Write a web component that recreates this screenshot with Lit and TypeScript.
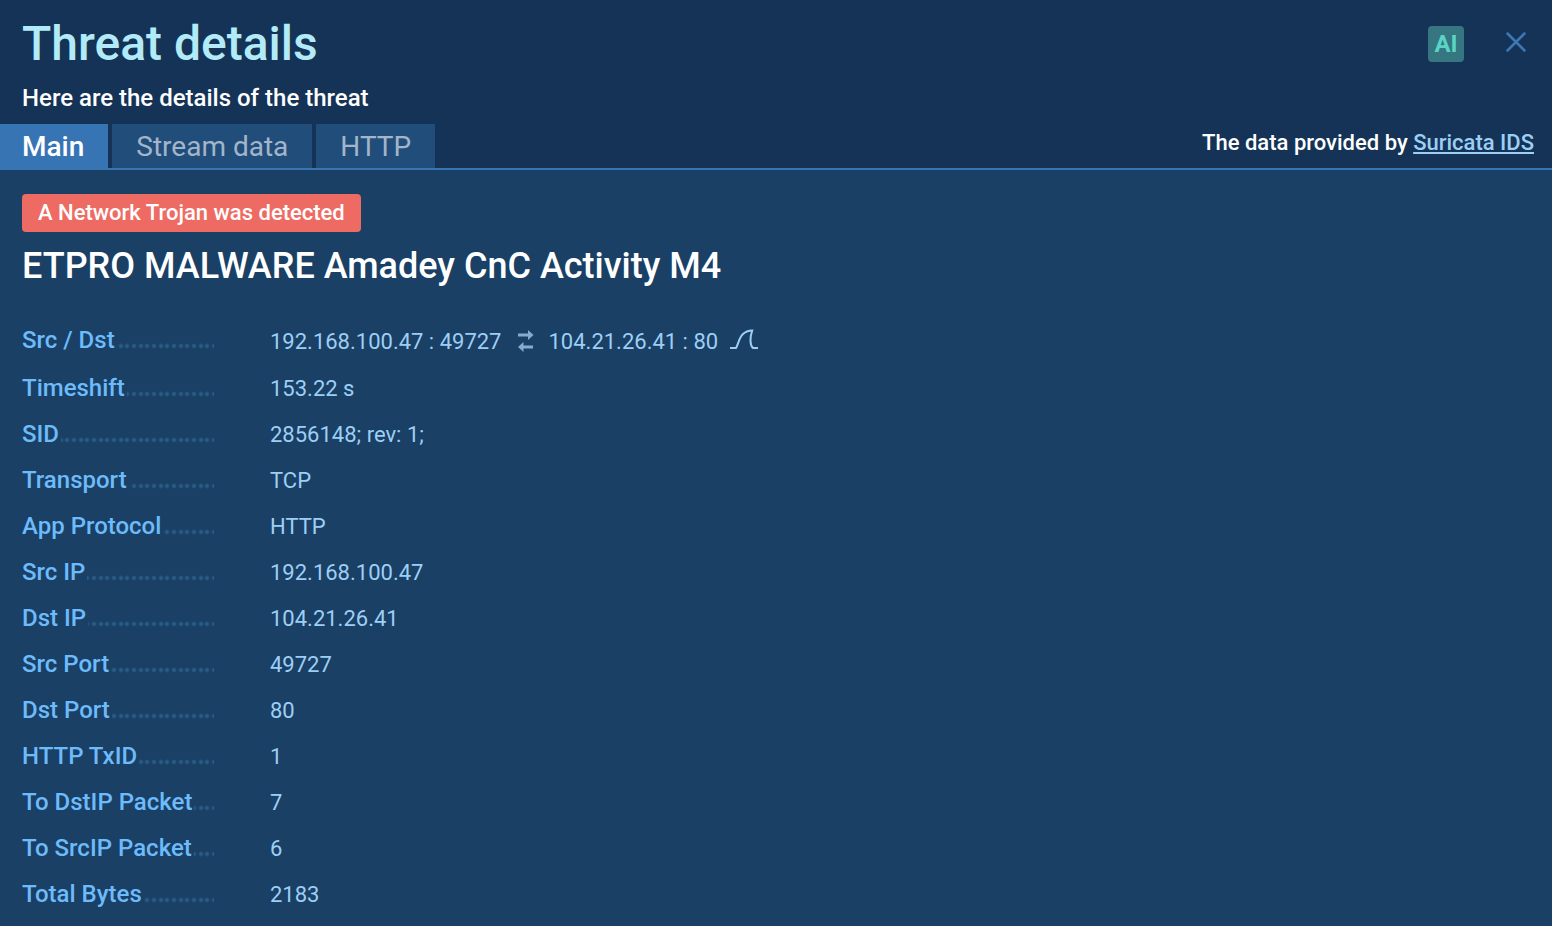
import { LitElement, html, css, svg } from "lit";
import { customElement, state } from "lit/decorators.js";

const swapIcon = svg`<svg class="swap" width="18" height="24" viewBox="0 0 18 24" aria-hidden="true">
  <path d="M1 3.600H11V0L16.500 5 11 10V6.600H1zM16 15.600H6.500V12L1 17l5.500 5v-3.400H16z" fill="currentColor"/>
</svg>`;

const curveIcon = svg`<svg width="30" height="26" viewBox="0 0 30 26" fill="none" stroke="currentColor" stroke-width="2" aria-hidden="true">
  <path d="M1 19H7C9 16 10 9 13.500 5.500Q17.500 1.500 23.200 1.500C22 5 21.200 8 21.500 12Q21.700 17 24 19H29"/>
</svg>`;

const closeIcon = svg`<svg width="20" height="20" viewBox="0 0 20 20" fill="none" stroke="currentColor" stroke-width="2.500" stroke-linecap="round" aria-hidden="true">
  <path d="M1.500 1.500l17 17M18.500 1.500l-17 17"/>
</svg>`;

@customElement("app-root")
export class AppRoot extends LitElement {
  @state() private tab = "Main";

  private tabs = ["Main", "Stream data", "HTTP"];

  private rows = [
    ["Timeshift", "153.22 s"],
    ["SID", "2856148; rev: 1;"],
    ["Transport", "TCP"],
    ["App Protocol", "HTTP"],
    ["Src IP", "192.168.100.47"],
    ["Dst IP", "104.21.26.41"],
    ["Src Port", "49727"],
    ["Dst Port", "80"],
    ["HTTP TxID", "1"],
    ["To DstIP Packet", "7"],
    ["To SrcIP Packet", "6"],
    ["Total Bytes", "2183"],
  ];

  static styles = css`
    :host {
      display: block;
      min-height: 100vh;
      background: #1a4066;
      color: #fff;
      font-family: Roboto, "Liberation Sans", sans-serif;
    }
    * { box-sizing: border-box; }
    h1, h2, p, dl, dd { margin: 0; }
    button {
      border: 0;
      padding: 0;
      background: none;
      font: inherit;
      cursor: pointer;
    }
    header {
      background: #143356;
      border-bottom: 2px solid #3774b3;
    }
    .top {
      display: flex;
      justify-content: space-between;
      padding: 16px 26px 0 22px;
    }
    h1 {
      font-size: 48px;
      line-height: 56px;
      font-weight: 500;
      color: #b3eaf7;
    }
    .sub {
      padding-top: 12px;
      font-size: 24px;
      line-height: 28px;
      font-weight: 500;
    }
    .actions {
      display: flex;
      align-items: flex-start;
      gap: 42px;
      padding-top: 10px;
    }
    .ai {
      width: 36px;
      height: 36px;
      border-radius: 4px;
      background: #357681;
      color: #5bd3c5;
      font-size: 24px;
      line-height: 36px;
      font-weight: 700;
    }
    .close {
      display: flex;
      padding-top: 6px;
      color: #3d78b4;
    }
    .bar {
      display: flex;
      justify-content: space-between;
      align-items: flex-start;
      padding: 12px 18px 0 0;
    }
    .tabs { display: flex; gap: 4px; }
    .tab {
      height: 44px;
      padding: 2px 24px 0;
      background: #214d7a;
      color: #a3b5cb;
      font-size: 28px;
      line-height: 42px;
    }
    .tab:first-child { padding-left: 22px; }
    .tab.on {
      background: #3774b3;
      color: #fff;
      font-weight: 500;
    }
    .source {
      padding-top: 4px;
      font-size: 22px;
      line-height: 30px;
      font-weight: 500;
    }
    .source a {
      color: #9dcff5;
      text-decoration-thickness: 2px;
      text-underline-offset: 2px;
    }
    main { padding: 24px 22px 0; }
    .alert {
      display: inline-block;
      padding: 0 16px;
      border-radius: 4px;
      background: #ee6b63;
      font-size: 22px;
      line-height: 38px;
      font-weight: 500;
      vertical-align: top;
    }
    h2 {
      padding: 12px 0 30px;
      font-size: 36px;
      line-height: 44px;
      font-weight: 500;
    }
    .row {
      display: flex;
      align-items: flex-start;
      gap: 56px;
      height: 46px;
      padding-top: 8px;
    }
    .row.first { height: 48px; }
    dt {
      width: 192px;
      color: #6dbbfa;
      font-size: 24px;
      line-height: 28px;
      font-weight: 500;
      background:
        radial-gradient(circle at 3px 20px, #2a5c87 1px, transparent 3px),
        radial-gradient(circle at 10px 20px, #2a5c87 1px, transparent 3px),
        radial-gradient(circle at 17px 20px, #2a5c87 1px, transparent 3px);
      background-size: 20px 28px;
      background-position: 2px 0;
    }
    dt span {
      display: inline-block;
      padding-right: 2px;
      background: #1a4066;
    }
    dd {
      display: flex;
      align-items: center;
      color: #9dcff5;
      font-size: 22px;
      line-height: 30px;
    }
    .first dd { line-height: 32px; }
    .swap {
      margin: 0 13px 0 16px;
      color: #86abcb;
    }
    .graph {
      display: flex;
      margin-left: 11px;
      color: inherit;
    }
  `;

  render() {
    return html`
      <header>
        <div class="top">
          <div>
            <h1>Threat details</h1>
            <p class="sub">Here are the details of the threat</p>
          </div>
          <div class="actions">
            <button class="ai">AI</button>
            <button class="close" aria-label="Close">${closeIcon}</button>
          </div>
        </div>
        <div class="bar">
          <div class="tabs" role="tablist">
            ${this.tabs.map(
              (t) => html`<button
                class="tab ${t === this.tab ? "on" : ""}"
                role="tab"
                aria-selected=${t === this.tab}
                @click=${() => (this.tab = t)}
              >${t}</button>`
            )}
          </div>
          <p class="source">The data provided by <a href="#">Suricata IDS</a></p>
        </div>
      </header>
      <main>
        <span class="alert">A Network Trojan was detected</span>
        <h2>ETPRO MALWARE Amadey CnC Activity M4</h2>
        <dl>
          <div class="row first">
            <dt><span>Src / Dst</span></dt>
            <dd>
              <span>192.168.100.47 : 49727</span>${swapIcon}<span>104.21.26.41 : 80</span>
              <button class="graph" aria-label="Show stream graph">${curveIcon}</button>
            </dd>
          </div>
          ${this.rows.map(
            ([k, v]) => html`<div class="row"><dt><span>${k}</span></dt><dd>${v}</dd></div>`
          )}
        </dl>
      </main>
    `;
  }
}
